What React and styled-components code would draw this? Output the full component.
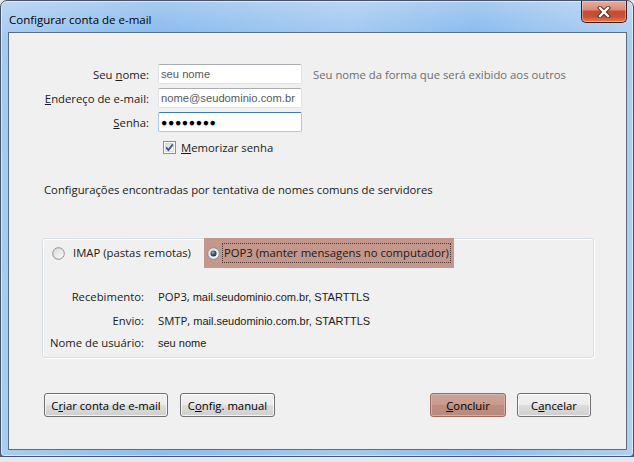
import React from 'react';
import styled, { createGlobalStyle } from 'styled-components';

const GlobalStyle = createGlobalStyle`
    body {
        margin: 0;
        background: linear-gradient(#e4e9ef 0, #bfc6ce 420px, #5b5d60 456px, #4a4c4f 462px);
        font-family: "Open Sans", "Noto Sans", sans-serif;
        font-size: 11.3px;
        color: #1a1a1a;
    }
    * { box-sizing: border-box; }
`;

const Window = styled.div`
    width: 634px;
    height: 457px;
    border: 1px solid #46536a;
    border-radius: 7px 7px 4px 4px;
    background:
        linear-gradient(90deg, rgba(255,255,255,0.25), rgba(255,255,255,0) 25%, rgba(255,255,255,0.2) 55%, rgba(255,255,255,0) 75%, rgba(255,255,255,0.3)),
        linear-gradient(#a6cbf1, #86b8ec 40px, #8dbdec);
    box-shadow: inset 0 0 0 1px rgba(255, 255, 255, 0.55);
    display: flex;
    flex-direction: column;
`;

const TitleBar = styled.div`
    height: 31px;
    display: flex;
    align-items: flex-start;
    padding-left: 8px;
`;

const Title = styled.div`
    margin-top: 10px;
    font-size: 11.5px;
    line-height: 18px;
    color: #000;
`;

const CloseButton = styled.div`
    margin-left: auto;
    margin-right: 6px;
    width: 46px;
    height: 22px;
    border: 1px solid #3d1f1a;
    border-top: none;
    border-radius: 0 0 5px 5px;
    background: linear-gradient(#eaab9b 0, #dc8d78 40%, #c84c31 50%, #cb4f33 75%, #e2805e 100%);
    box-shadow: inset 0 0 0 1px rgba(255, 220, 210, 0.45);
    display: flex;
    align-items: center;
    justify-content: center;
`;

const Content = styled.div`
    flex: 1;
    margin: 0 6px 6px 7px;
    background: #f0f0f0;
    border: 1px solid #5b6b80;
    display: flex;
    flex-direction: column;
`;

const FormGrid = styled.div`
    margin-top: 31px;
    padding-left: 35px;
    display: grid;
    grid-template-columns: 105px 144px auto;
    grid-auto-rows: 20px;
    column-gap: 9px;
    row-gap: 4px;
    align-items: center;
`;

const Label = styled.label`
    text-align: right;
    white-space: nowrap;
`;

const TextBox = styled.div`
    height: 20px;
    border: 1px solid ${p => (p.$focused ? '#a9c9e6' : '#e2e3ea')};
    border-top-color: ${p => (p.$focused ? '#3d7bad' : '#abadb3')};
    border-radius: 2px;
    background: #fff;
    padding: 0 0 1px 2px;
    display: flex;
    align-items: center;
    font-family: "Liberation Sans", Arial, sans-serif;
    font-size: ${p => (p.$password ? '10.5px' : '11.2px')};
    letter-spacing: ${p => (p.$password ? '0.6px' : '0')};
    color: ${p => (p.$password ? '#000' : '#5a5a5a')};
    overflow: hidden;
    white-space: nowrap;
`;

const Hint = styled.span`
    margin-left: 2px;
    color: #6d6d6d;
    white-space: nowrap;
`;

const CheckRow = styled.div`
    grid-column: 2 / span 2;
    height: 13px;
    margin-top: 3px;
    padding-left: 5px;
    display: flex;
    align-items: center;
    gap: 5px;
`;

const InfoText = styled.div`
    margin-top: 26px;
    padding-left: 35px;
    line-height: 16px;
`;

const GroupBox = styled.div`
    margin: 40px 0 0 33px;
    width: 552px;
    height: 120px;
    border: 1px solid #d5dfe5;
    border-radius: 3px;
    box-shadow: inset 1px 1px 0 #fff, 1px 1px 0 #fff;
    display: flex;
    flex-direction: column;
`;

const RadioRow = styled.div`
    height: 30px;
    margin-top: -1px;
    display: flex;
    align-items: center;
    padding-left: 9px;
`;

const RadioOption = styled.div`
    height: 30px;
    display: flex;
    align-items: center;
    gap: ${p => (p.$selected ? '2px' : '6px')};
    padding: ${p => (p.$selected ? '0 3px' : '0')};
    margin-left: ${p => (p.$selected ? '11px' : '0')};
    background: ${p => (p.$selected ? '#c3978c' : 'transparent')};
`;

const OptionText = styled.span`
    padding: 1px 1px;
    border: 1px dotted ${p => (p.$focus ? '#4a3a36' : 'transparent')};
    line-height: 16px;
    white-space: nowrap;
`;

const Details = styled.div`
    margin-top: 17px;
    padding-left: 7px;
    display: grid;
    grid-template-columns: 94px auto;
    grid-template-rows: 22px 22px 18px;
    column-gap: 14px;
    row-gap: 2px;
    align-items: center;
`;

const DetailLabel = styled.span`
    text-align: right;
    white-space: nowrap;
`;

const DetailValue = styled.span`
    white-space: nowrap;
`;

const Small = styled.span`
    font-family: "Liberation Sans", Arial, sans-serif;
    font-size: 11px;
`;

const ButtonBar = styled.div`
    margin-top: 35px;
    padding: 0 35px;
    display: flex;
    justify-content: space-between;
`;

const ButtonGroup = styled.div`
    display: flex;
    gap: ${p => p.$gap}px;
`;

const Button = styled.div`
    width: ${p => p.$w}px;
    height: 24px;
    border: 1px solid ${p => (p.$primary ? '#9b6a5f' : '#707070')};
    border-radius: 3px;
    background: ${p =>
        p.$primary
            ? 'linear-gradient(#cda296 0, #c89b8f 50%, #bd8d80 51%, #b88a7e 100%)'
            : 'linear-gradient(#f2f2f2 0, #ebebeb 50%, #dddddd 51%, #cfcfcf 100%)'};
    box-shadow: inset 0 0 0 1px ${p => (p.$primary ? 'rgba(225, 190, 180, 0.7)' : 'rgba(255, 255, 255, 0.75)')};
    display: flex;
    align-items: center;
    justify-content: center;
    color: #000;
    white-space: nowrap;
`;

const Radio = ({ checked }) => (
    <svg width="13" height="13" viewBox="0 0 13 13">
        <defs>
            <linearGradient id={checked ? 'rg1' : 'rg0'} x1="0" y1="0" x2="1" y2="1">
                <stop offset="0" stopColor="#d8d8d8" />
                <stop offset="1" stopColor="#fbfbfb" />
            </linearGradient>
            <radialGradient id="dot" cx="0.4" cy="0.35" r="0.7">
                <stop offset="0" stopColor="#9db3cc" />
                <stop offset="0.5" stopColor="#3b5674" />
                <stop offset="1" stopColor="#1d2f45" />
            </radialGradient>
        </defs>
        <circle cx="6.5" cy="6.5" r="5.8" fill={`url(#${checked ? 'rg1' : 'rg0'})`} stroke="#8d8f91" strokeWidth="1" />
        {checked && <circle cx="6.5" cy="6.5" r="3" fill="url(#dot)" />}
    </svg>
);

const CheckBox = () => (
    <svg width="13" height="13" viewBox="0 0 13 13">
        <defs>
            <linearGradient id="cbg" x1="0" y1="0" x2="1" y2="1">
                <stop offset="0" stopColor="#dcdcdc" />
                <stop offset="1" stopColor="#fafafa" />
            </linearGradient>
        </defs>
        <rect x="0.5" y="0.5" width="12" height="12" fill="#fff" stroke="#8e8f8f" />
        <rect x="2.5" y="2.5" width="8" height="8" fill="url(#cbg)" stroke="#c8c9ca" strokeWidth="0.6" />
        <path d="M3.2 6.4 L5.4 9 L9.8 3.4" fill="none" stroke="#3a5590" strokeWidth="1.8" />
    </svg>
);

const CloseGlyph = () => (
    <svg width="14" height="12" viewBox="0 0 14 12">
        <path d="M3 2 L11 10 M11 2 L3 10" stroke="#5a2a20" strokeWidth="4.4" strokeLinecap="square" />
        <path d="M3 2 L11 10 M11 2 L3 10" stroke="#fff" strokeWidth="2.4" strokeLinecap="square" />
    </svg>
);

const App = () => {
    return (
        <>
            <GlobalStyle />
            <Window>
                <TitleBar>
                    <Title>Configurar conta de e-mail</Title>
                    <CloseButton>
                        <CloseGlyph />
                    </CloseButton>
                </TitleBar>
                <Content>
                    <FormGrid>
                        <Label>Seu <u>n</u>ome:</Label>
                        <TextBox>seu nome</TextBox>
                        <Hint>Seu nome da forma que será exibido aos outros</Hint>

                        <Label><u>E</u>ndereço de e-mail:</Label>
                        <TextBox>nome@seudominio.com.br</TextBox>
                        <span />

                        <Label><u>S</u>enha:</Label>
                        <TextBox $focused $password>●●●●●●●●</TextBox>
                        <span />

                        <span />
                        <CheckRow>
                            <CheckBox />
                            <span><u>M</u>emorizar senha</span>
                        </CheckRow>
                    </FormGrid>

                    <InfoText>Configurações encontradas por tentativa de nomes comuns de servidores</InfoText>

                    <GroupBox>
                        <RadioRow>
                            <RadioOption>
                                <Radio />
                                <OptionText>IMAP (pastas remotas)</OptionText>
                            </RadioOption>
                            <RadioOption $selected>
                                <Radio checked />
                                <OptionText $focus>POP3 (manter mensagens no computador)</OptionText>
                            </RadioOption>
                        </RadioRow>
                        <Details>
                            <DetailLabel>Recebimento:</DetailLabel>
                            <DetailValue>POP3, <Small>mail.seudominio.com.br, STARTTLS</Small></DetailValue>
                            <DetailLabel>Envio:</DetailLabel>
                            <DetailValue>SMTP, <Small>mail.seudominio.com.br, STARTTLS</Small></DetailValue>
                            <DetailLabel>Nome de usuário:</DetailLabel>
                            <DetailValue><Small>seu nome</Small></DetailValue>
                        </Details>
                    </GroupBox>

                    <ButtonBar>
                        <ButtonGroup $gap={12}>
                            <Button $w={124}>C<u>r</u>iar conta de e-mail</Button>
                            <Button $w={95}>C<u>o</u>nfig. manual</Button>
                        </ButtonGroup>
                        <ButtonGroup $gap={11}>
                            <Button $w={76} $primary><u>C</u>oncluir</Button>
                            <Button $w={74}>C<u>a</u>ncelar</Button>
                        </ButtonGroup>
                    </ButtonBar>
                </Content>
            </Window>
        </>
    );
};

export default App;
